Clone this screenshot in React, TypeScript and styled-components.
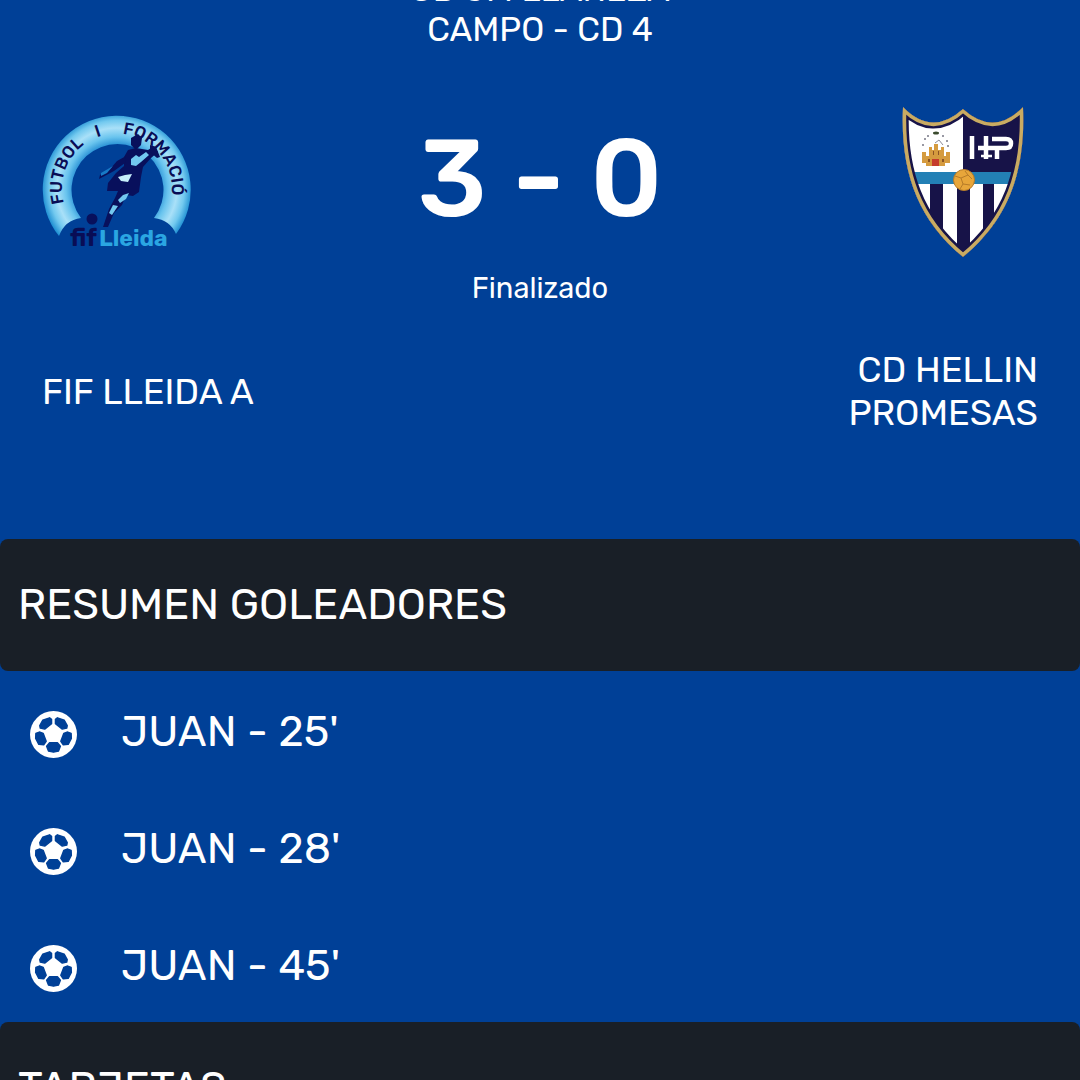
import React from "react";
import styled, { createGlobalStyle } from "styled-components";

const GlobalStyle = createGlobalStyle`
  * { box-sizing: border-box; }
  body {
    margin: 0;
    background: #004097;
    color: #fff;
    font-family: Rubik, Roboto, "Liberation Sans", sans-serif;
  }
  h2, p, ul { margin: 0; padding: 0; }
`;

const Screen = styled.main`
  height: 100vh;
  overflow: hidden;
`;

const Match = styled.header`
  padding: 0 42px;
`;

const Venue = styled.p`
  display: flex;
  flex-direction: column;
  justify-content: flex-end;
  align-items: center;
  height: 50px;
  overflow: hidden;
  font-size: 34px;
  line-height: 40px;
`;

const VenueLine = styled.span`
  flex: none;
`;

const Scoreboard = styled.section`
  display: grid;
  grid-template-columns: 150px 1fr 150px;
  align-items: start;
  margin-top: 57px;
`;

const Crest = styled.svg`
  display: block;
  width: 150px;
  height: 150px;
`;

const Result = styled.div`
  display: flex;
  flex-direction: column;
  align-items: center;
`;

const Score = styled.strong`
  font-size: 110px;
  line-height: 144px;
  font-weight: 500;
`;

const Status = styled.span`
  margin-top: 19px;
  font-size: 29px;
  line-height: 36px;
`;

const Teams = styled.section`
  display: flex;
  justify-content: space-between;
  align-items: center;
  margin-top: 42px;
  padding-bottom: 105px;
`;

const TeamName = styled.h2<{ $align: "left" | "right" }>`
  max-width: 240px;
  font-size: 36px;
  line-height: 43px;
  font-weight: 400;
  text-align: ${(p) => p.$align};
`;

const SectionTitle = styled.h2`
  padding: 40px 18px;
  border-radius: 8px;
  background: #191f27;
  font-size: 43px;
  line-height: 52px;
  font-weight: 400;
`;

const Goals = styled.ul`
  list-style: none;
`;

const Goal = styled.li`
  display: flex;
  align-items: center;
  gap: 44px;
  height: 117px;
  padding: 10px 30px 0;
  font-size: 43px;
  line-height: 52px;
`;

const BallIcon = styled.svg`
  flex: none;
  width: 47px;
  height: 47px;
`;

const GoalText = styled.span`
  padding-bottom: 6px;
`;

const Ball = () => (
  <BallIcon viewBox="0 0 48 48" aria-hidden="true">
    <circle cx="24" cy="24" r="24" fill="#fff" />
    <g fill="#004097" stroke="#004097" strokeWidth="1.5" strokeLinejoin="round">
      <path d="M10 15 L13 9.5 L20 7 L22 8.5 L22 13 L15 18.5 L10.500 17.500Z" />
      <path d="M38 15 L35 9.5 L28 7 L26 8.500 L26 13 L33 18.500 L37.500 17.500Z" />
      <path d="M6 23 L9.500 21.500 L13.500 23 L16.500 31 L14 34.500 L9 34 L5.800 28Z" />
      <path d="M42 23 L38.500 21.500 L34.500 23 L31.500 31 L34 34.500 L39 34 L42.200 28Z" />
      <path d="M20 32.500 L28 32.500 L31 36 L29 41 L24 42 L19 41 L17 36Z" />
    </g>
  </BallIcon>
);

const LleidaCrest = () => (
  <Crest viewBox="0 0 150 150" role="img" aria-label="FIF Lleida">
    <defs>
      <radialGradient id="ring" gradientUnits="userSpaceOnUse" cx="75" cy="81" r="75">
        <stop offset="0.58" stopColor="#2b93d6" />
        <stop offset="0.68" stopColor="#69c4ee" />
        <stop offset="0.8" stopColor="#a9e0f8" />
        <stop offset="0.9" stopColor="#72c9ef" />
        <stop offset="1" stopColor="#1f8fd2" />
      </radialGradient>
      <path id="motto" d="M23.500 101 A55 55 0 1 1 126.500 101" />
    </defs>
    <path
      fill="url(#ring)"
      d="M17 129 A74 74 0 1 1 134 127 Q128 113 112 111 A46 46 0 1 0 39 111 Q23 113 17 129Z"
    />
    <g fill="#090d55" fontSize="17" fontWeight="500" textAnchor="middle">
      <text><textPath href="#motto" startOffset="38">FUTBOL</textPath></text>
      <text><textPath href="#motto" startOffset="88">I</textPath></text>
      <text><textPath href="#motto" startOffset="155">FORMACIÓ</textPath></text>
    </g>
    <g fill="#08105c">
      <path d="M89 31 L96 27 L100 31 L99 38 L94 43 L89 38Z" />
      <path d="M86 43 L94 41 L106 43 L112 39 L116 45 L109 51 L101 60 L99 70 L97 85 L91 89 L84 88 L80 98 L72 106 L66 120 L61 120 L67 102 L73 91 L76 84 L65 84 L66 76 L74 66 L82 59 L82 50Z" />
      <path d="M84 49 L75 54 L69 61 L58 68 L57 72 L72 64 L83 56Z" />
      <path d="M108 38 L114 40 L118 50 L115 51 L108 45Z" />
      <circle cx="50" cy="112" r="5.500" />
    </g>
    <g fill="#72c8ef">
      <path d="M89 52 L94 48 L97 50 L104 45 L107 48 L99 55 L94 59 L89 58Z" />
      <path d="M76 70 L83 68 L90 67 L86 75 L79 74Z" fill="#c7effb" />
      <path d="M81 88 L87 86 L84 92 L78 96 L76 93Z" />
      <path d="M71 98 L76 99 L70 108 L67 106Z" />
      <path d="M59 66 L71 59 L65 66 L59 69Z" fill="#187ac6" />
      <path d="M103 36 L108 34 L106 39Z" />
    </g>
    <text x="28" y="139" fill="#090d55" fontSize="24" fontWeight="700">fif</text>
    <text x="57" y="139" fill="#2aa6e2" fontSize="23" fontWeight="700">Lleida</text>
  </Crest>
);

const shield =
  "M15 0 Q44 30 75 2 Q106 30 135 0 C138 65 120 113 75 150 C30 113 12 65 15 0Z";

const HellinCrest = () => (
  <Crest viewBox="0 0 150 150" role="img" aria-label="CD Hellín Promesas">
    <defs>
      <clipPath id="shield"><path d={shield} /></clipPath>
    </defs>
    <g clipPath="url(#shield)">
      <rect width="150" height="150" fill="#fff" />
      <path fill="#171348" d="M75 0H150V65H75Z" />
      <path fill="#171348" d="M42 77H55V150H42Z M69 77H82V150H69Z M95 77H106V150H95Z" />
      <path fill="#2380b5" d="M0 65H150V77H0Z" />
    </g>
    <path d={shield} fill="none" stroke="#171348" strokeWidth="12" clipPath="url(#shield)" />
    <path d={shield} fill="none" stroke="#c9ab62" strokeWidth="7" clipPath="url(#shield)" />
    <g stroke="#fff" strokeWidth="4.500" fill="none">
      <path d="M84 29V52 M98 29V52 M109 40V52 M90 41H118 Q123 41 123 36.500 Q123 32 118 32H104" />
      <path d="M93 49H104" strokeWidth="2.500" />
    </g>
    <g fill="#d59b3f">
      <path d="M34 45H38V49H41V40H44V43H46V37H50V43H53V40H56V49H58V45H62V56H57V59H38V56H34Z" />
      <path d="M44 52H51V59H44Z" fill="#c53c2c" />
      <path d="M45 44H46V48H45Z M50 44H51V48H50Z M40 52H42V55H40Z M54 52H56V55H54Z" fill="#8b5424" />
    </g>
    <g fill="#767684">
      <circle cx="37" cy="32" r="1" /><circle cx="35" cy="38" r="1" />
      <circle cx="40" cy="29" r="1" /><circle cx="55" cy="29" r="1" />
      <circle cx="59" cy="34" r="1" /><circle cx="60" cy="39" r="1" />
      <path d="M47 36 L51 33 L55 38" fill="none" stroke="#8b8b98" />
      <ellipse cx="48" cy="26" rx="3" ry="1.500" fill="#3b4b2e" />
    </g>
    <circle cx="76" cy="73" r="10.500" fill="#e8a63a" stroke="#b67b28" />
    <path
      d="M67 69 L73 71 L75 77 L72 82 M73 71 L80 68 L84 72 M75 77 L82 78 M80 68 L77 64"
      fill="none"
      stroke="#b67b28"
    />
  </Crest>
);

const goals = [
  { player: "JUAN", minute: 25 },
  { player: "JUAN", minute: 28 },
  { player: "JUAN", minute: 45 },
];

export default function App() {
  return (
    <>
      <GlobalStyle />
      <Screen>
        <Match>
          <Venue>
            <VenueLine>CD JM LLANEZA</VenueLine>
            <VenueLine>CAMPO - CD 4</VenueLine>
          </Venue>
          <Scoreboard>
            <LleidaCrest />
            <Result>
              <Score>3 - 0</Score>
              <Status>Finalizado</Status>
            </Result>
            <HellinCrest />
          </Scoreboard>
          <Teams>
            <TeamName $align="left">FIF LLEIDA A</TeamName>
            <TeamName $align="right">CD HELLIN PROMESAS</TeamName>
          </Teams>
        </Match>
        <SectionTitle>RESUMEN GOLEADORES</SectionTitle>
        <Goals>
          {goals.map((goal) => (
            <Goal key={goal.minute}>
              <Ball />
              <GoalText>{`${goal.player} - ${goal.minute}'`}</GoalText>
            </Goal>
          ))}
        </Goals>
        <SectionTitle>TARJETAS</SectionTitle>
      </Screen>
    </>
  );
}
